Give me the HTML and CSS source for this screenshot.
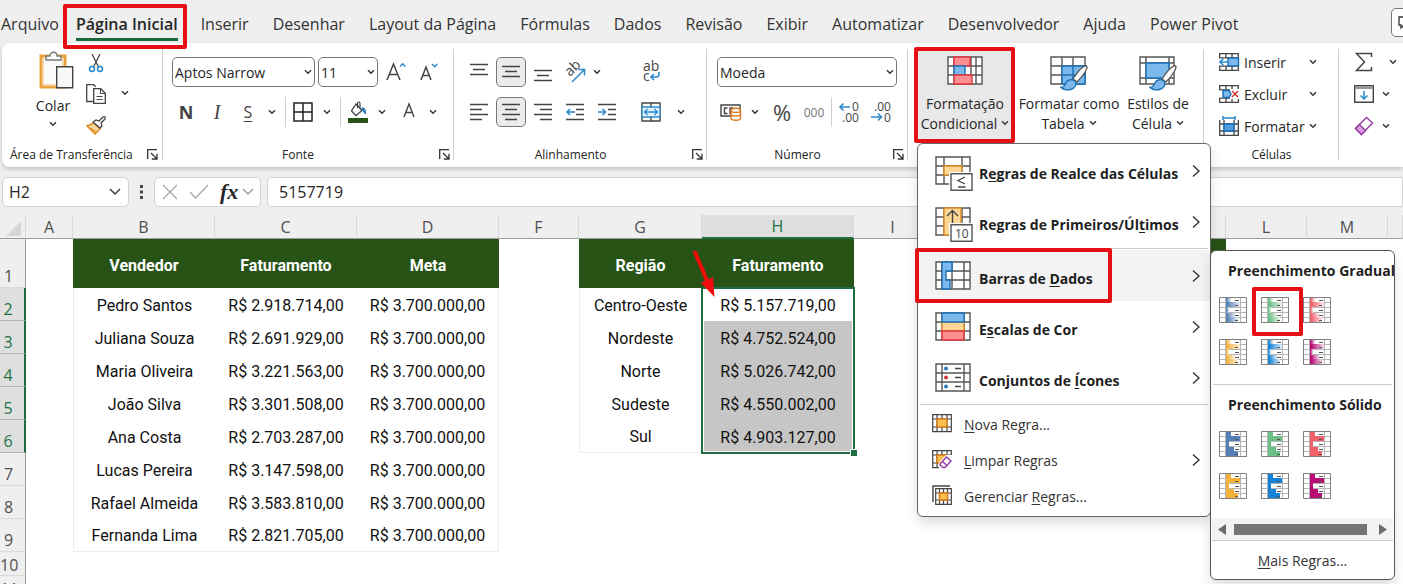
FILE: index.html
```html
<!DOCTYPE html>
<html lang="pt-BR">
<head>
<meta charset="utf-8">
<title>Formatação Condicional</title>
<link rel="stylesheet" href="styles.css">
</head>
<body>
<svg class="defs" aria-hidden="true">
  <defs>
    <linearGradient id="fade" x1="0" x2="1" y1="0" y2="0"><stop offset="0.1" stop-color="#fff" stop-opacity="0"/><stop offset="1" stop-color="#fff" stop-opacity="0.85"/></linearGradient>
    <symbol id="chev" viewBox="0 0 8 6"><path d="M1 1.2l3 3 3-3" fill="none" stroke="#333" stroke-width="1.4"/></symbol>
    <symbol id="next" viewBox="0 0 8 14"><path d="M1 1.500l6 5.500-6 5.500" fill="none" stroke="#333" stroke-width="1.400"/></symbol>
    <symbol id="launch" viewBox="0 0 11 11"><path d="M.7 10V.7H10M4 4l5.500 5.500M10 4.800V10H4.800" fill="none" stroke="#333" stroke-width="1.300"/></symbol>
    <symbol id="bars" viewBox="0 0 28 26">
      <path d="M.5.5h27v25H.5z" fill="#fff"/>
      <path d="M0 5.500h28M0 10.500h28M0 15.500h28M0 20.500h28M6.500 0v26M21.500 0v26" stroke="#b5b5b5" fill="none"/>
      <path d="M7 1h5v4H7zM7 5h14v5H7zM7 10h3v6H7zM7 16h8v4H7zM7 20h12v5H7z" fill="currentColor"/>
      <path d="M16 3.500h4M16 8.500h3M16 13.500h4M16 18.500h4M16 23.500h3" stroke="#555" stroke-width="1"/>
      <path d="M.5.5h27v25H.5z" fill="none" stroke="#808080"/>
    </symbol>
    <symbol id="gbars" viewBox="0 0 28 26">
      <path d="M.5.5h27v25H.5z" fill="#fff"/>
      <path d="M0 5.500h28M0 10.500h28M0 15.500h28M0 20.500h28M6.500 0v26M21.500 0v26" stroke="#b5b5b5" fill="none"/>
      <path d="M7 1h5v4H7zM7 5h14v5H7zM7 10h3v6H7zM7 16h9v4H7zM7 20h12v5H7z" fill="currentColor"/>
      <path d="M7 1h5v4H7z" fill="url(#fade)"/><path d="M7 5h14v5H7z" fill="url(#fade)"/><path d="M7 10h3v6H7z" fill="url(#fade)"/><path d="M7 16h9v4H7z" fill="url(#fade)"/><path d="M7 20h12v5H7z" fill="url(#fade)"/>
      <path d="M16 3.500h4M16 8.500h3M16 13.500h4M16 18.500h4M16 23.500h3" stroke="#555" stroke-width="1"/>
      <path d="M.5.5h27v25H.5z" fill="none" stroke="#808080"/>
    </symbol>
    <symbol id="brush" viewBox="0 0 28 26"><path d="M13 14C17 8 22 1 26 .7c2 .5.5 4-1 6.300-2.500 4-5.500 7.500-8 10z" fill="#fff" stroke="#555" stroke-width="1.300"/><path d="M1 22.500c3 0 4-2 5-5 1.500-3 7-4 9-1s0 7-4.500 8c-4 .8-7.500 0-9.500-2z" fill="#7db8ec" stroke="#1b6fb5" stroke-width="1.300"/></symbol>
  </defs>
</svg>

<nav class="tabs">
  <a href="#">Arquivo</a>
  <a href="#" class="active">Página Inicial<span class="mark mark-tab"></span></a>
  <a href="#">Inserir</a>
  <a href="#">Desenhar</a>
  <a href="#">Layout da Página</a>
  <a href="#">Fórmulas</a>
  <a href="#">Dados</a>
  <a href="#">Revisão</a>
  <a href="#">Exibir</a>
  <a href="#">Automatizar</a>
  <a href="#">Desenvolvedor</a>
  <a href="#">Ajuda</a>
  <a href="#">Power Pivot</a>
  <button class="comments" aria-label="Comentários"><svg width="14" height="14" viewBox="0 0 14 14"><path d="M1 1h12v8H6l-3 3V9H1z" fill="none" stroke="#333" stroke-width="1.300"/></svg></button>
</nav>

<section class="ribbon">
  <div class="group g-clip">
    <div class="tools">
      <button class="big paste" aria-label="Colar">
        <svg width="36" height="40" viewBox="0 0 36 40"><path d="M3 5h24v31H3z" fill="#fff" stroke="#e8a33d" stroke-width="3"/><path d="M5.500 7.500h19v26h-19z" fill="#fafafa" stroke="#f6d9a8"/><path d="M8 9V5h4c0-5 7-5 7 0h4v4z" fill="#fff" stroke="#777" stroke-width="1.300"/><path d="M18.700 15.700h16v21h-16z" fill="#f8f8f8" stroke="#444" stroke-width="1.400"/></svg>
        <span>Colar</span>
        <svg class="chev"><use href="#chev"/></svg>
      </button>
      <div class="stack">
        <button class="ico" aria-label="Recortar"><svg width="16" height="20" viewBox="0 0 16 20"><path d="M4 1l6.500 13M12 1L5.500 14" stroke="#444" stroke-width="1.300"/><circle cx="4" cy="16" r="2.500" fill="none" stroke="#2b88c8" stroke-width="1.500"/><circle cx="12" cy="16" r="2.500" fill="none" stroke="#2b88c8" stroke-width="1.500"/></svg></button>
        <div class="split"><button class="ico" aria-label="Copiar"><svg width="20" height="20" viewBox="0 0 20 20"><path d="M7 17.500H.7V.7h7l2 2" fill="none" stroke="#444" stroke-width="1.300"/><path d="M7.700 4.700h7l4.600 4.600v10H7.700z" fill="#fff" stroke="#444" stroke-width="1.300"/><path d="M14.500 5v4.500H19M10.500 12.500h6M10.500 15.500h6" fill="none" stroke="#444"/></svg></button><button class="dd" aria-label="Opções de copiar"><svg class="chev"><use href="#chev"/></svg></button></div>
        <button class="ico" aria-label="Pincel de Formatação"><svg width="20" height="20" viewBox="0 0 20 20"><path d="M1 11l7-3 6 6-5 5z" fill="#f9d79b" stroke="#dd8a1c" stroke-width="1.400"/><path d="M4 13l6 4" stroke="#dd8a1c" stroke-width="1.400"/><path d="M7 7l3-2 3 1 4-4c1.500-1 3 .5 2 2l-4 4 1 3-2 2z" fill="#fff" stroke="#444" stroke-width="1.300"/></svg></button>
      </div>
    </div>
    <div class="caption"><span>Área de Transferência</span><button class="launch" aria-label="Mais"><svg width="11" height="11"><use href="#launch"/></svg></button></div>
  </div>

  <div class="group g-font">
    <div class="tools rows">
      <div class="row">
        <label class="combo font-name"><select aria-label="Fonte"><option>Aptos Narrow</option></select><svg class="chev"><use href="#chev"/></svg></label>
        <label class="combo font-size"><select aria-label="Tamanho"><option>11</option></select><svg class="chev"><use href="#chev"/></svg></label>
        <button class="ico" aria-label="Aumentar fonte"><svg width="22" height="22" viewBox="0 0 22 22"><path d="M2 19L8.500 3 15 19M4.300 13.500h8.400" fill="none" stroke="#444" stroke-width="1.500"/><path d="M15 5.500l2.700-2.700 2.700 2.700" fill="none" stroke="#2b88c8" stroke-width="1.500"/></svg></button>
        <button class="ico" aria-label="Diminuir fonte"><svg width="22" height="22" viewBox="0 0 22 22"><path d="M3 19L8 6l5 13M4.800 14.500h6.400" fill="none" stroke="#444" stroke-width="1.500"/><path d="M14 3l2.700 2.700L19.400 3" fill="none" stroke="#2b88c8" stroke-width="1.500"/></svg></button>
      </div>
      <div class="row">
        <button class="ico glyph bold">N</button>
        <button class="ico glyph italic">I</button>
        <div class="split"><button class="ico glyph under">S</button><button class="dd" aria-label="Sublinhado"><svg class="chev"><use href="#chev"/></svg></button></div>
        <i class="vsep"></i>
        <div class="split"><button class="ico" aria-label="Bordas"><svg width="20" height="20" viewBox="0 0 20 20"><path d="M1 1h18v18H1zM10 1v18M1 10h18" fill="none" stroke="#222" stroke-width="1.500"/></svg></button><button class="dd" aria-label="Mais bordas"><svg class="chev"><use href="#chev"/></svg></button></div>
        <i class="vsep"></i>
        <div class="split"><button class="ico" aria-label="Cor de Preenchimento"><svg width="20" height="22" viewBox="0 0 20 22"><path d="M8 3l6 6.500-6 5L3.500 10z" fill="#fff" stroke="#444" stroke-width="1.300"/><path d="M9.500 7V2.500c0-2 2.500-2 2.500 0V7" fill="none" stroke="#444" stroke-width="1.200"/><path d="M14 7c2-.5 3.500.5 3.500 6-1.500-1-1.500-3-3.500-4z" fill="#2b78b8" stroke="#2b78b8"/><path d="M0 17h20v5H0z" fill="#275317"/></svg></button><button class="dd" aria-label="Mais cores"><svg class="chev"><use href="#chev"/></svg></button></div>
        <div class="split"><button class="ico" aria-label="Cor da Fonte"><svg width="16" height="20" viewBox="0 0 16 20"><path d="M3 15L8 2l5 13M4.800 10.500h6.400" fill="none" stroke="#444" stroke-width="1.400"/></svg></button><button class="dd" aria-label="Mais cores de fonte"><svg class="chev"><use href="#chev"/></svg></button></div>
      </div>
    </div>
    <div class="caption"><span>Fonte</span><button class="launch" aria-label="Mais"><svg width="11" height="11"><use href="#launch"/></svg></button></div>
  </div>

  <div class="group g-align">
    <div class="tools">
      <div class="rows">
        <div class="row">
          <button class="al" aria-label="Em cima"><svg width="18" height="20" viewBox="0 0 18 20"><path d="M0 2.500h18M3 7.500h12M0 12.500h18" stroke="#444" stroke-width="1.400"/></svg></button>
          <button class="al on" aria-label="No meio"><svg width="18" height="20" viewBox="0 0 18 20"><path d="M0 4.500h18M3 9.500h12M0 14.500h18" stroke="#444" stroke-width="1.400"/></svg></button>
          <button class="al" aria-label="Embaixo"><svg width="18" height="20" viewBox="0 0 18 20"><path d="M0 8.500h18M3 13.500h12M0 18.500h18" stroke="#444" stroke-width="1.400"/></svg></button>
          <button class="al" aria-label="Orientação"><svg width="22" height="22" viewBox="0 0 22 22"><text transform="translate(6 16) rotate(-45)" font-size="14" fill="#444">ab</text><path d="M8 21L20 9M14.500 8.500H20.500V14.500" fill="none" stroke="#2b88c8" stroke-width="1.500"/></svg></button>
          <button class="dd left" aria-label="Mais orientações"><svg class="chev"><use href="#chev"/></svg></button>
        </div>
        <div class="row">
          <button class="al" aria-label="Esquerda"><svg width="18" height="18" viewBox="0 0 18 18"><path d="M0 1.500h18M0 6.500h12M0 11.500h18M0 16.500h12" stroke="#444" stroke-width="1.400"/></svg></button>
          <button class="al on" aria-label="Centralizar"><svg width="18" height="18" viewBox="0 0 18 18"><path d="M0 1.500h18M3 6.500h12M0 11.500h18M3 16.500h12" stroke="#444" stroke-width="1.400"/></svg></button>
          <button class="al" aria-label="Direita"><svg width="18" height="18" viewBox="0 0 18 18"><path d="M0 1.500h18M6 6.500h12M0 11.500h18M6 16.500h12" stroke="#444" stroke-width="1.400"/></svg></button>
          <button class="al" aria-label="Diminuir recuo"><svg width="18" height="18" viewBox="0 0 18 18"><path d="M0 1.500h18M10 6.500h8M10 11.500h8M0 16.500h18" stroke="#444" stroke-width="1.400"/><path d="M9 9H1M4 6L1 9l3 3" fill="none" stroke="#2b88c8" stroke-width="1.500"/></svg></button>
          <button class="al" aria-label="Aumentar recuo"><svg width="18" height="18" viewBox="0 0 18 18"><path d="M0 1.500h18M10 6.500h8M10 11.500h8M0 16.500h18" stroke="#444" stroke-width="1.400"/><path d="M0 9h7M4.500 6l3 3-3 3" fill="none" stroke="#2b88c8" stroke-width="1.500"/></svg></button>
        </div>
      </div>
      <i class="vsep tall"></i>
      <div class="rows">
        <div class="row"><button class="ico" aria-label="Quebrar Texto"><svg width="22" height="24" viewBox="0 0 22 24"><text x="3" y="11" font-size="14" fill="#444">ab</text><text x="3" y="21" font-size="14" fill="#444">c</text><path d="M19 12v2c0 2-1 3-3 3h-5M14 14l-3 3 3 3" fill="none" stroke="#2b88c8" stroke-width="1.600"/></svg></button></div>
        <div class="row"><div class="split"><button class="ico" aria-label="Mesclar"><svg width="20" height="20" viewBox="0 0 20 20"><path d="M1 1h18v18H1zM10 1v4M10 15v4" fill="#fff" stroke="#444" stroke-width="1.400"/><path d="M1 5h18v10H1z" fill="#e3f1fb" stroke="#2b88c8" stroke-width="1.400"/><path d="M4 10h12M6.500 7L3.500 10l3 3M13.500 7l3 3-3 3" fill="none" stroke="#2b88c8" stroke-width="1.300"/></svg></button><button class="dd wide" aria-label="Mais opções de mesclar"><svg class="chev"><use href="#chev"/></svg></button></div></div>
      </div>
    </div>
    <div class="caption"><span>Alinhamento</span><button class="launch" aria-label="Mais"><svg width="11" height="11"><use href="#launch"/></svg></button></div>
  </div>

  <div class="group g-num">
    <div class="tools rows">
      <div class="row"><label class="combo fmt"><select aria-label="Formato de Número"><option>Moeda</option></select><svg class="chev"><use href="#chev"/></svg></label></div>
      <div class="row">
        <div class="split"><button class="ico" aria-label="Formato de Contabilização"><svg width="22" height="18" viewBox="0 0 22 18"><path d="M1 2h19v11H1z" fill="#fff" stroke="#444" stroke-width="1.400"/><path d="M7.500 5H4.500v5.500h3M13 5h-3v5.500h2" fill="none" stroke="#444" stroke-width="1.400"/><path d="M11 7.500c0-3 9.500-3 9.500 0V15c0 3-9.500 3-9.500 0z" fill="#fff" stroke="#dd7a1c" stroke-width="1.400"/><path d="M11 7.500c0 2.500 9.500 2.500 9.500 0M11 11c0 2.500 9.500 2.500 9.500 0" fill="none" stroke="#dd7a1c" stroke-width="1.400"/></svg></button><button class="dd" aria-label="Mais moedas"><svg class="chev"><use href="#chev"/></svg></button></div>
        <button class="ico glyph pct">%</button>
        <button class="al glyph zeros">000</button>
        <i class="vsep"></i>
        <button class="al" aria-label="Aumentar casas decimais"><svg width="22" height="24" viewBox="0 0 22 24"><text x="14" y="11" font-size="12" fill="#444">0</text><text x="4" y="22" font-size="12" fill="#444">.00</text><path d="M12 7H2M5.500 3.500L2 7l3.500 3.500" fill="none" stroke="#2b88c8" stroke-width="1.600"/></svg></button>
        <button class="al" aria-label="Diminuir casas decimais"><svg width="22" height="24" viewBox="0 0 22 24"><text x="4" y="11" font-size="12" fill="#444">.00</text><text x="14" y="22" font-size="12" fill="#444">0</text><path d="M1 17h10M8 13.500l3.500 3.500L8 20.500" fill="none" stroke="#2b88c8" stroke-width="1.600"/></svg></button>
      </div>
    </div>
    <div class="caption"><span>Número</span><button class="launch" aria-label="Mais"><svg width="11" height="11"><use href="#launch"/></svg></button></div>
  </div>

  <div class="group g-styles">
    <div class="style-wrap">
      <button class="style pressed">
        <svg width="36" height="30" viewBox="0 0 36 30"><path d="M1 1h34v27H1zM1 10h34M1 19h34M29 1v27M24 1v27M7 1v27" fill="#fff" stroke="#555" stroke-width="1.400"/><path d="M7 1h16v9H7z" fill="#fd8f92" stroke="#e3363f" stroke-width="1.400"/><path d="M7 10h11v9H7z" fill="#7db8ec" stroke="#1b6fb5" stroke-width="1.400"/><path d="M7 19h18v9H7z" fill="#fd8f92" stroke="#e3363f" stroke-width="1.400"/></svg>
        <span>Formatação<br>Condicional<svg class="chev inline"><use href="#chev"/></svg></span>
      </button>
      <span class="mark mark-style"></span>

      <div class="menu" role="menu">
        <button class="item" role="menuitem"><svg width="38" height="36" viewBox="0 0 38 36"><path d="M1 1h34v27H1zM1 10h34M1 19h34M9 1v27M27 1v27" fill="#fff" stroke="#555" stroke-width="1.400"/><path d="M9 10h18v9H9z" fill="#fcd795" stroke="#e0902a" stroke-width="1.400"/><path d="M14 16h24v20H14z" fill="#fff"/><path d="M16 17.700h21v16.500H16z" fill="#fff" stroke="#555" stroke-width="1.400"/><path d="M30 21l-7 3.500 7 3.500M23 31h7.500" fill="none" stroke="#444" stroke-width="1.300"/></svg><span>R<u>e</u>gras de Realce das Células</span><svg class="next"><use href="#next"/></svg></button>
        <button class="item" role="menuitem"><svg width="38" height="36" viewBox="0 0 38 36"><path d="M1 1h34v27H1zM1 10h34M1 19h34M9 1v27M27 1v27" fill="#fff" stroke="#555" stroke-width="1.400"/><path d="M9 1h17v27H9z" fill="#fcd795" stroke="#e0902a" stroke-width="1.400"/><path d="M17.500 20V4M12 9l5.500-5.500L23 9" fill="none" stroke="#444" stroke-width="1.400"/><path d="M14 16h24v20H14z" fill="#fff"/><path d="M16 17.700h21v16.500H16z" fill="#fff" stroke="#555" stroke-width="1.400"/><text x="20" y="31" font-size="12" font-weight="400" fill="#444">10</text></svg><span>Regras de Primeiros/Úl<u>t</u>imos</span><svg class="next"><use href="#next"/></svg></button>
        <hr>
        <div class="sub-wrap">
          <button class="item hover" role="menuitem"><svg width="38" height="36" viewBox="0 0 38 36"><path d="M1 1h34v27H1zM1 10h34M1 19h34M7 1v27M29 1v27M17 1v27" fill="#fff" stroke="#555" stroke-width="1.400"/><path d="M7 1h10v9h-6v9h4v9H7z" fill="#7db8ec" stroke="#1b6fb5" stroke-width="1.400"/></svg><span>Barras de <u>D</u>ados</span><svg class="next"><use href="#next"/></svg></button>
          <span class="mark mark-item"></span>
          <div class="submenu" role="menu">
            <h2>Preenchimento Gradual</h2>
            <div class="swatches">
              <button class="blue" aria-label="Barra gradual azul"><svg><use href="#gbars"/></svg></button>
              <button class="green" aria-label="Barra gradual verde"><svg><use href="#gbars"/></svg><span class="mark mark-swatch"></span></button>
              <button class="red" aria-label="Barra gradual vermelha"><svg><use href="#gbars"/></svg></button>
              <button class="orange" aria-label="Barra gradual laranja"><svg><use href="#gbars"/></svg></button>
              <button class="sky" aria-label="Barra gradual azul-claro"><svg><use href="#gbars"/></svg></button>
              <button class="pink" aria-label="Barra gradual roxa"><svg><use href="#gbars"/></svg></button>
            </div>
            <hr>
            <h2>Preenchimento Sólido</h2>
            <div class="swatches">
              <button class="blue" aria-label="Barra sólida azul"><svg><use href="#bars"/></svg></button>
              <button class="green" aria-label="Barra sólida verde"><svg><use href="#bars"/></svg></button>
              <button class="red" aria-label="Barra sólida vermelha"><svg><use href="#bars"/></svg></button>
              <button class="orange" aria-label="Barra sólida laranja"><svg><use href="#bars"/></svg></button>
              <button class="sky" aria-label="Barra sólida azul-claro"><svg><use href="#bars"/></svg></button>
              <button class="pink" aria-label="Barra sólida roxa"><svg><use href="#bars"/></svg></button>
            </div>
            <div class="scroll"><svg width="8" height="11" viewBox="0 0 8 11"><path d="M8 0v11L0 5.500z" fill="#6b6b6b"/></svg><i></i><svg width="8" height="11" viewBox="0 0 8 11"><path d="M0 0v11l8-5.500z" fill="#6b6b6b"/></svg></div>
            <button class="more" role="menuitem"><u>M</u>ais Regras...</button>
          </div>
        </div>
        <button class="item" role="menuitem"><svg width="38" height="36" viewBox="0 0 38 36"><path d="M1 1h34v27H1zM1 10h34M1 19h34M7 1v27M29 1v27" fill="#fff" stroke="#555" stroke-width="1.400"/><path d="M7 10h22v9H7z" fill="#fcd795" stroke="#e0902a" stroke-width="1.400"/><path d="M7 1h22v9H7z" fill="#7db8ec" stroke="#1b6fb5" stroke-width="1.400"/><path d="M7 19h22v9H7z" fill="#fd8f92" stroke="#e3363f" stroke-width="1.400"/></svg><span>E<u>s</u>calas de Cor</span><svg class="next"><use href="#next"/></svg></button>
        <button class="item" role="menuitem"><svg width="38" height="36" viewBox="0 0 38 36"><path d="M1 1h34v27H1zM1 10h34M1 19h34M7 1v27M29 1v27" fill="#fff" stroke="#555" stroke-width="1.400"/><path d="M20 5.500h6M20 14.500h6M20 23.500h6" stroke="#444" stroke-width="1.300"/><circle cx="11" cy="5.500" r="2" fill="#2b78b8"/><circle cx="11" cy="14.500" r="2" fill="#d13438"/><circle cx="11" cy="23.500" r="2" fill="#2b78b8"/></svg><span>Conjuntos de <u>Í</u>cones</span><svg class="next"><use href="#next"/></svg></button>
        <hr>
        <button class="item small" role="menuitem"><svg width="20" height="19" viewBox="0 0 20 19"><path d="M.7.7h18.600v17H.7zM.7 5h18.600M.7 13h18.600M5 .7v17M15 .7v17M10 .7v17" fill="#fff" stroke="#444" stroke-width="1.200"/><path d="M5 5h10v8H5z" fill="#fcc04f" stroke="#d97a1c" stroke-width="1.400"/></svg><span><u>N</u>ova Regra...</span></button>
        <button class="item small" role="menuitem"><svg width="20" height="19" viewBox="0 0 20 19"><path d="M.7.7h18.600v17H.7zM.7 5h18.600M.7 13h18.600M5 .7v17M15 .7v17M10 .7v17" fill="#fff" stroke="#444" stroke-width="1.200"/><path d="M5 5h10v8H5z" fill="#fcc04f" stroke="#d97a1c" stroke-width="1.400"/><path d="M7 19V13l7-8h6v14z" fill="#fff"/><path d="M8.500 13.500l6-6.500 4.500 4-6 6.500h-2L8 15z" fill="#fff" stroke="#9b3aa8" stroke-width="1.400"/><path d="M10.500 11.500l4.500 4" stroke="#9b3aa8" stroke-width="1.300"/></svg><span><u>L</u>impar Regras</span><svg class="next"><use href="#next"/></svg></button>
        <button class="item small" role="menuitem"><svg width="20" height="20" viewBox="0 0 20 20"><path d="M1 17V1h17" fill="none" stroke="#444" stroke-width="1.400"/><path d="M3.700 3.700h15.600v15.600H3.700zM3.700 8h15.600M3.700 15h15.600M7.500 3.700v15.600M15.500 3.700v15.600M11.500 3.700v15.600" fill="#fff" stroke="#444" stroke-width="1.200"/><path d="M7.500 8h8v7h-8z" fill="#fcc04f" stroke="#d97a1c" stroke-width="1.400"/></svg><span>Gerenciar <u>R</u>egras...</span></button>
      </div>
    </div>
    <button class="style">
      <svg width="38" height="34" viewBox="0 0 38 34"><path d="M1 1h34v27H1zM1 10h34M1 19h34M12 1v27M23 1v27" fill="#fff" stroke="#555" stroke-width="1.400"/><path d="M12 10h23v18H12zM23 10v18M12 19h23" fill="#7db8ec" stroke="#1b6fb5" stroke-width="1.400"/><use href="#brush" x="10" y="9" width="28" height="26"/></svg>
      <span>Formatar como<br>Tabela<svg class="chev inline"><use href="#chev"/></svg></span>
    </button>
    <button class="style">
      <svg width="38" height="34" viewBox="0 0 38 34"><path d="M1 1h34v27H1zM1 7h34M1 22h34M7 1v27M30 1v27" fill="#fff" stroke="#555" stroke-width="1.400"/><path d="M7 7h23v15H7z" fill="#7db8ec" stroke="#1b6fb5" stroke-width="1.400"/><use href="#brush" x="10" y="9" width="28" height="26"/></svg>
      <span>Estilos de<br>Célula<svg class="chev inline"><use href="#chev"/></svg></span>
    </button>
  </div>

  <div class="group g-cells">
    <div class="list">
      <button class="line"><svg width="20" height="18" viewBox="0 0 20 18"><path d="M.7.7h18.600v16.600H.7zM.7 5h18.600M.7 13h18.600M7 .7v16.600M13 .7v16.600" fill="#fff" stroke="#444" stroke-width="1.300"/><path d="M9 5h10.500v8H9z" fill="#7db8ec" stroke="#1b6fb5" stroke-width="1.400"/><path d="M0 5.500h8v7H0z" fill="#fff"/><path d="M10 9H1M4.500 5.500L1 9l3.500 3.500" fill="none" stroke="#2b88c8" stroke-width="1.600"/></svg><span>Inserir</span><svg class="chev"><use href="#chev"/></svg></button>
      <button class="line"><svg width="20" height="18" viewBox="0 0 20 18"><path d="M.7.7h18.600v16.600H.7zM.7 5h18.600M.7 13h18.600M7 .7v16.600M13 .7v16.600" fill="#fff" stroke="#444" stroke-width="1.300"/><path d="M11 4h9v10h-9zM0 5.600h4v6.800H0z" fill="#fff"/><path d="M4 5.500h6l2 3.500-2 3.500H4z" fill="#7db8ec" stroke="#1b6fb5" stroke-width="1.400"/><path d="M13 6l6 6M19 6l-6 6" stroke="#d13438" stroke-width="1.500"/></svg><span>Excluir</span><svg class="chev"><use href="#chev"/></svg></button>
      <button class="line"><svg width="20" height="20" viewBox="0 0 20 20"><path d="M.7 4v15.300h18.600V4M.7 8h18.600M.7 15h18.600M5 4v15M15 4v15" fill="none" stroke="#444" stroke-width="1.300"/><path d="M5 8h10v7H5z" fill="#4f9fe0" stroke="#1b6fb5" stroke-width="1.400"/><path d="M4 2h12M4 0v4M16 0v4" fill="none" stroke="#2b88c8" stroke-width="1.500"/></svg><span>Formatar</span><svg class="chev"><use href="#chev"/></svg></button>
    </div>
    <div class="caption"><span>Células</span></div>
  </div>

  <div class="group g-edit">
    <div class="list">
      <button class="line sum" aria-label="Soma"><svg width="20" height="20" viewBox="0 0 20 20"><path d="M17.500 5V1.500H2.500L10.500 10l-8 8.500h15V15" fill="none" stroke="#444" stroke-width="1.500"/></svg><svg class="chev"><use href="#chev"/></svg></button>
      <button class="line" aria-label="Preencher"><svg width="20" height="18" viewBox="0 0 20 18"><path d="M.7.7h18.600v16.600H.7z" fill="#fff" stroke="#444" stroke-width="1.400"/><path d="M1 1h18v3H1z" fill="#999"/><path d="M10 6v8M6.500 10.500L10 14l3.500-3.500" fill="none" stroke="#2b88c8" stroke-width="1.500"/></svg><svg class="chev"><use href="#chev"/></svg></button>
      <button class="line" aria-label="Limpar"><svg width="20" height="20" viewBox="0 0 20 20"><path d="M1.500 12.500L12.500 1.500l6 5.500-11 11.500z" fill="#fff" stroke="#8f3f9b" stroke-width="1.400"/><path d="M1.500 12.500L5.500 8.500l6 6-4 4z" fill="#dd9be6" stroke="#8f3f9b" stroke-width="1.400"/></svg><svg class="chev"><use href="#chev"/></svg></button>
    </div>
  </div>
</section>

<section class="formula">
  <label class="name-box"><input value="H2" aria-label="Caixa de nome"><svg width="12" height="8" viewBox="0 0 12 8"><path d="M1 1l5 5 5-5" fill="none" stroke="#333" stroke-width="1.400"/></svg></label>
  <svg width="3" height="14" viewBox="0 0 3 14"><path d="M0 0h3v3H0zM0 5.500h3v3H0zM0 11h3v3H0z" fill="#444"/></svg>
  <div class="fx">
    <button aria-label="Cancelar"><svg width="16" height="16" viewBox="0 0 16 16"><path d="M1 1l14 14M15 1L1 15" stroke="#a8a8a8" stroke-width="1.300"/></svg></button>
    <button aria-label="Inserir"><svg width="20" height="16" viewBox="0 0 20 16"><path d="M1 8l5.500 6L19 1" fill="none" stroke="#a8a8a8" stroke-width="1.300"/></svg></button>
    <button class="fn">fx</button>
    <svg width="12" height="8" viewBox="0 0 12 8"><path d="M1 1l5 5 5-5" fill="none" stroke="#999" stroke-width="1.300"/></svg>
  </div>
  <input class="value" value="5157719" aria-label="Barra de fórmulas">
</section>

<table class="sheet">
  <colgroup><col class="c-num"><col class="c-a"><col class="c-b"><col class="c-c"><col class="c-c"><col class="c-f"><col class="c-g"><col class="c-h"><col class="c-i"><col class="c-i"><col class="c-k"><col class="c-l"><col class="c-l"><col></colgroup>
  <thead><tr><th class="corner"><svg width="15" height="15" viewBox="0 0 15 15"><path d="M15 0v15H0z" fill="#d6d6d6"/></svg></th><th>A</th><th>B</th><th>C</th><th>D</th><th>F</th><th>G</th><th class="picked">H</th><th>I</th><th>J</th><th>K</th><th>L</th><th>M</th><th></th></tr></thead>
  <tbody>
    <tr class="head"><th>1</th><td></td><td class="h">Vendedor</td><td class="h">Faturamento</td><td class="h">Meta</td><td></td><td class="h">Região</td><td class="h arrow-cell">Faturamento<svg class="arrow" width="24" height="50" viewBox="0 0 24 50"><path d="M1.500 1L15 33" stroke="#f00d0d" stroke-width="4"/><path d="M8 33l12-6 1.500 20z" fill="#f00d0d"/></svg></td><td></td><td></td><td class="h"></td><td></td><td></td><td></td></tr>
    <tr class="in"><th>2</th><td></td><td class="l">Pedro Santos</td><td>R$ 2.918.714,00</td><td class="r">R$ 3.700.000,00</td><td></td><td class="l r">Centro-Oeste</td><td class="origin">R$ 5.157.719,00<span class="selection"></span></td><td></td><td></td><td></td><td></td><td></td><td></td></tr>
    <tr class="in"><th>3</th><td></td><td class="l">Juliana Souza</td><td>R$ 2.691.929,00</td><td class="r">R$ 3.700.000,00</td><td></td><td class="l r">Nordeste</td><td class="s">R$ 4.752.524,00</td><td></td><td></td><td></td><td></td><td></td><td></td></tr>
    <tr class="in"><th>4</th><td></td><td class="l">Maria Oliveira</td><td>R$ 3.221.563,00</td><td class="r">R$ 3.700.000,00</td><td></td><td class="l r">Norte</td><td class="s">R$ 5.026.742,00</td><td></td><td></td><td></td><td></td><td></td><td></td></tr>
    <tr class="in"><th>5</th><td></td><td class="l">João Silva</td><td>R$ 3.301.508,00</td><td class="r">R$ 3.700.000,00</td><td></td><td class="l r">Sudeste</td><td class="s">R$ 4.550.002,00</td><td></td><td></td><td></td><td></td><td></td><td></td></tr>
    <tr class="in"><th>6</th><td></td><td class="l">Ana Costa</td><td>R$ 2.703.287,00</td><td class="r">R$ 3.700.000,00</td><td></td><td class="l r b">Sul</td><td class="s">R$ 4.903.127,00</td><td></td><td></td><td></td><td></td><td></td><td></td></tr>
    <tr><th>7</th><td></td><td class="l">Lucas Pereira</td><td>R$ 3.147.598,00</td><td class="r">R$ 3.700.000,00</td><td></td><td></td><td></td><td></td><td></td><td></td><td></td><td></td><td></td></tr>
    <tr><th>8</th><td></td><td class="l">Rafael Almeida</td><td>R$ 3.583.810,00</td><td class="r">R$ 3.700.000,00</td><td></td><td></td><td></td><td></td><td></td><td></td><td></td><td></td><td></td></tr>
    <tr><th>9</th><td></td><td class="l b">Fernanda Lima</td><td class="b">R$ 2.821.705,00</td><td class="r b">R$ 3.700.000,00</td><td></td><td></td><td></td><td></td><td></td><td></td><td></td><td></td><td></td></tr>
    <tr class="short"><th>10</th><td colspan="13"></td></tr>
    <tr class="short"><th>11</th><td colspan="13"></td></tr>
  </tbody>
</table>
</body>
</html>
```

FILE: styles.css
```css
* { box-sizing: border-box; }
html, body { height: 100%; }
body {
  margin: 0;
  overflow: hidden;
  background: #efefef;
  color: #262626;
  font-family: "Open Sans", "Noto Sans", sans-serif;
  font-size: 14px;
}
button, input, select { font: inherit; color: inherit; }
button { border: 0; padding: 0; background: none; }
svg { flex: none; display: block; overflow: visible; }
.defs { position: absolute; width: 0; height: 0; }
.chev { width: 8px; height: 6px; }
.next { width: 8px; height: 14px; }
.mark { position: absolute; border: 4px solid #e60f14; border-radius: 2px; pointer-events: none; }

/* Tabs */
.tabs { position: relative; z-index: 3; display: flex; gap: 24px; height: 43px; padding: 10px 0 0 1px; font-size: 16px; line-height: 28px; white-space: nowrap; }
.tabs a { color: #333; text-decoration: none; }
.tabs .active { position: relative; height: 31px; margin: 0 -1px 0 -7px; border-bottom: 3px solid #1a6b3c; font-weight: 600; color: #262626; }
.mark-tab { inset: -6px -9px -11px -13px; }
.comments { display: flex; align-items: center; width: 40px; height: 29px; margin: -2px -28px 0 auto; padding-left: 6px; border: 1px solid #777; border-radius: 5px; background: #fff; }

/* Ribbon */
.ribbon { position: relative; z-index: 2; display: flex; height: 124px; margin-left: 2px; background: #fff; border-radius: 8px 0 0 8px; box-shadow: 0 2px 4px #0003; }
.group { position: relative; flex: none; display: flex; flex-direction: column; justify-content: space-between; padding: 14px 10px 3px; }
.group::after { content: ""; position: absolute; top: 6px; right: 0; bottom: 7px; width: 1px; background: #d0d0d0; }
.g-clip { width: 161px; padding: 8px 8px 3px; }
.g-font { width: 291px; padding-left: 9px; }
.g-align { width: 253px; }
.g-num { width: 201px; }
.g-styles { flex-direction: row; justify-content: flex-start; gap: 5px; width: 296px; padding: 6px 9px 0; }
.g-cells { width: 135px; padding: 3px 4px 3px 15px; }
.g-edit { flex: 1; padding: 3px 0 3px 15px; }
.g-edit::after { display: none; }
.tools { display: flex; }
.rows { display: flex; flex-direction: column; gap: 10px; }
.row { display: flex; align-items: center; gap: 3px; height: 30px; }
.caption { display: flex; align-items: center; justify-content: center; position: relative; height: 20px; padding-right: 20px; font-size: 12px; color: #222; }
.g-clip .caption { justify-content: flex-start; padding-right: 0; }
.launch { position: absolute; right: -6px; top: 5px; }
.g-clip .launch { right: -3px; }
.g-cells .caption { margin-right: 11px; padding-right: 0; }
.ico { display: flex; align-items: center; justify-content: center; width: 28px; height: 30px; }
.split { display: flex; }
.dd { display: flex; align-items: center; justify-content: center; width: 20px; height: 30px; }
.dd.wide { width: 32px; }
.dd.left { width: 10px; }
.big { display: flex; flex-direction: column; align-items: center; gap: 5px; width: 86px; }
.big span { line-height: 20px; }
.paste > svg:first-child { margin-left: 6px; }
.stack { display: flex; flex-direction: column; margin-top: -4px; }
.g-clip .ico { width: 20px; height: 31px; margin-left: -10px; }
.g-clip .dd { width: 38px; }
.vsep { width: 1px; height: 30px; background: #d0d0d0; }
.vsep.tall { height: 78px; margin: -2px 8px 0 7px; }
.glyph { font-size: 18px; color: #444; }
.bold { font-weight: 700; }
.italic { font-family: "Liberation Serif", serif; font-style: italic; font-size: 20px; }
.under { text-decoration: underline; text-underline-offset: 3px; font-size: 16px; }
.pct { width: 30px; font-size: 22px; }
.zeros { font-size: 12px; color: #777; }
.combo { position: relative; display: flex; align-items: center; height: 30px; }
.combo select { appearance: none; width: 100%; height: 30px; padding: 0 2px; border: 1px solid #767676; border-radius: 5px; background: #fff; }
.combo .chev { position: absolute; right: 3px; }
.font-name { width: 144px; }
.font-size { width: 61px; }
.g-font .row:first-child .ico { width: 30px; }
.fmt { width: 180px; }
.g-num .row { gap: 2px; }
.al { display: flex; align-items: center; justify-content: center; width: 30px; height: 30px; border: 1px solid transparent; border-radius: 5px; }
.al.on { border-color: #767676; background: #ebebeb; }
.g-align .row { gap: 2px; }
.style-wrap { position: relative; align-self: flex-start; }
.style { display: flex; flex-direction: column; align-items: center; gap: 6px; width: 96px; height: 90px; padding-top: 7px; line-height: 20px; white-space: nowrap; }
.style > svg { height: 34px; margin-bottom: -2px; }
.style > svg[height="30"] { height: 30px; margin-bottom: 2px; }
.pressed { background: #e8e8e8; }
.g-styles > .style { width: 102px; }
.g-styles > .style:last-child { width: 66px; }
.inline { display: inline-block; margin-left: 4px; vertical-align: 3px; }
.mark-style { inset: -2px -2px -4px -3px; z-index: 4; }
.list { display: flex; flex-direction: column; }
.line { display: flex; align-items: center; gap: 5px; height: 32px; text-align: left; }
.line span { width: 60px; }
.g-edit .line { gap: 8px; }
.g-edit .sum { gap: 15px; }

/* Menu */
.menu { position: absolute; top: 94px; left: 0; z-index: 3; width: 294px; padding: 1px 0 2px; border: 1px solid #666; border-radius: 6px; background: #fff; box-shadow: 0 6px 12px #0002; }
.menu hr { height: 1px; margin: 1px 2px; border: 0; background: #ccc; }
.item { display: flex; align-items: center; width: 100%; height: 51px; padding: 0 10px 0 17px; text-align: left; font-weight: 700; white-space: nowrap; color: #1f1f1f; }
.item > svg:first-child { margin-top: 6px; }
.item span { flex: 1; margin-left: 6px; padding-top: 6px; }
.item.hover { background: #f3f3f3; }
.item u, .more u { text-underline-offset: 2px; }
.item.small { height: 36px; padding-left: 14px; font-weight: 400; color: #333; }
.item.small > svg:first-child { margin-top: -2px; }
.item.small span { margin-left: 12px; padding: 0; }
.sub-wrap { position: relative; }
.mark-item { inset: -2px 98px -2px -3px; }
.submenu { position: absolute; top: 0; left: 292px; width: 185px; overflow: hidden; padding-top: 6px; border: 1px solid #555; border-radius: 6px; background: #fff; box-shadow: 0 6px 12px #0002; }
.submenu h2 { margin: 0; padding-left: 17px; line-height: 28px; font-size: 14px; font-weight: 700; white-space: nowrap; color: #1f1f1f; }
.swatches { display: grid; grid-template-columns: repeat(3, 28px); gap: 16px 14px; padding: 12px 8px 19px; }
.swatches button { position: relative; height: 26px; }
.swatches svg { width: 28px; height: 26px; }
.submenu hr { margin: 0 2px 6px; }
.mark-swatch { inset: -10px -14px -13px -9px; }
.blue { color: #5580b5; } .green { color: #6abf87; } .red { color: #f0616a; }
.orange { color: #f3b23c; } .sky { color: #1583d8; } .pink { color: #b80b74; }
.scroll { display: flex; align-items: center; justify-content: space-between; height: 23px; margin: 0 1px; padding: 0 6px; background: #f3f3f3; border-bottom: 1px solid #ccc; }
.scroll i { width: 133px; height: 11px; margin-right: 5px; background: #757575; }
.more { width: 100%; height: 38px; color: #333; }

/* Formula bar */
.formula { display: flex; align-items: center; gap: 6px; padding: 10px 0 8px 2px; height: 48px; font-size: 16px; }
.name-box, .fx, .value { height: 30px; border: 1px solid #d2d2d2; border-radius: 5px; background: #fff; }
.name-box { display: flex; align-items: center; width: 127px; padding-right: 7px; margin-right: 5px; }
.name-box input { flex: 1; min-width: 0; border: 0; padding: 0 0 0 6px; background: none; }
.fx { display: flex; align-items: center; gap: 11px; width: 107px; padding: 0 3px 0 7px; margin-left: 5px; }
.fn { font-family: "Liberation Serif", serif; font-style: italic; font-weight: 700; font-size: 22px; margin-right: -7px; }
.value { flex: 1; min-width: 0; padding: 0 11px; border-radius: 5px 0 0 5px; }

/* Sheet */
.sheet { table-layout: fixed; width: 100%; border-collapse: separate; border-spacing: 0; background: #fff; font-family: Roboto, "Open Sans", sans-serif; font-size: 16px; color: #111; }
.sheet col { width: 78px; }
.sheet .c-num { width: 26px; } .sheet .c-a { width: 47px; } .sheet .c-b { width: 142px; } .sheet .c-c { width: 142px; }
.sheet .c-f { width: 80px; } .sheet .c-g { width: 123px; } .sheet .c-h { width: 152px; } .sheet .c-i { width: 78px; }
.sheet .c-k { width: 216px; } .sheet .c-l { width: 81px; } .sheet col:last-child { width: auto; }
.sheet td, .sheet th { padding: 0; text-align: center; overflow: visible; white-space: nowrap; }
.sheet th { background: #efefef; color: #505050; font-family: "Open Sans", sans-serif; font-weight: 400; }
.sheet thead th { height: 24px; border-bottom: 1px solid #9b9b9b; border-right: 1px solid #d8d8d8; line-height: 20px; }
.sheet thead .corner svg { margin: 4px 0 0 6px; }
.sheet thead .picked { background: #dfdfdf; color: #217346; border-bottom: 2px solid #1f6e43; }
.sheet tbody th { height: 33px; padding: 2px 8px 1px 0; border-right: 1px solid #9b9b9b; border-bottom: 1px solid #dadada; line-height: 20px; vertical-align: bottom; }
.sheet .head th, .sheet .head td { height: 49px; }
.sheet .in th { background: #dfdfdf; color: #217346; border-right: 2px solid #1f6e43; border-bottom-color: #b5b5b5; }
.sheet tbody .short th { height: 24px; padding-bottom: 0; }
.sheet .h { background: #275317; color: #fff; font-weight: 700; padding-top: 3px; }
.sheet .l { border-left: 1px solid #ececec; } .sheet .r { border-right: 1px solid #ececec; } .sheet .b { border-bottom: 1px solid #ececec; }
.sheet .s { background: #c6c6c6; }
.sheet tr:not(.head) td { padding-top: 1px; }
.sheet .origin, .sheet .arrow-cell { position: relative; }
.selection { position: absolute; z-index: 1; top: -1px; left: -1px; width: calc(100% + 2px); height: calc(500% + 2px); border: 2px solid #1f6e43; box-shadow: inset 0 0 0 1px #fff; }
.selection::after { content: ""; position: absolute; right: -4px; bottom: -4px; width: 6px; height: 6px; border: 1px solid #fff; border-width: 1px 0 0 1px; background: #1f6e43; }
.arrow { position: absolute; z-index: 2; top: 11px; left: -9px; }
```
